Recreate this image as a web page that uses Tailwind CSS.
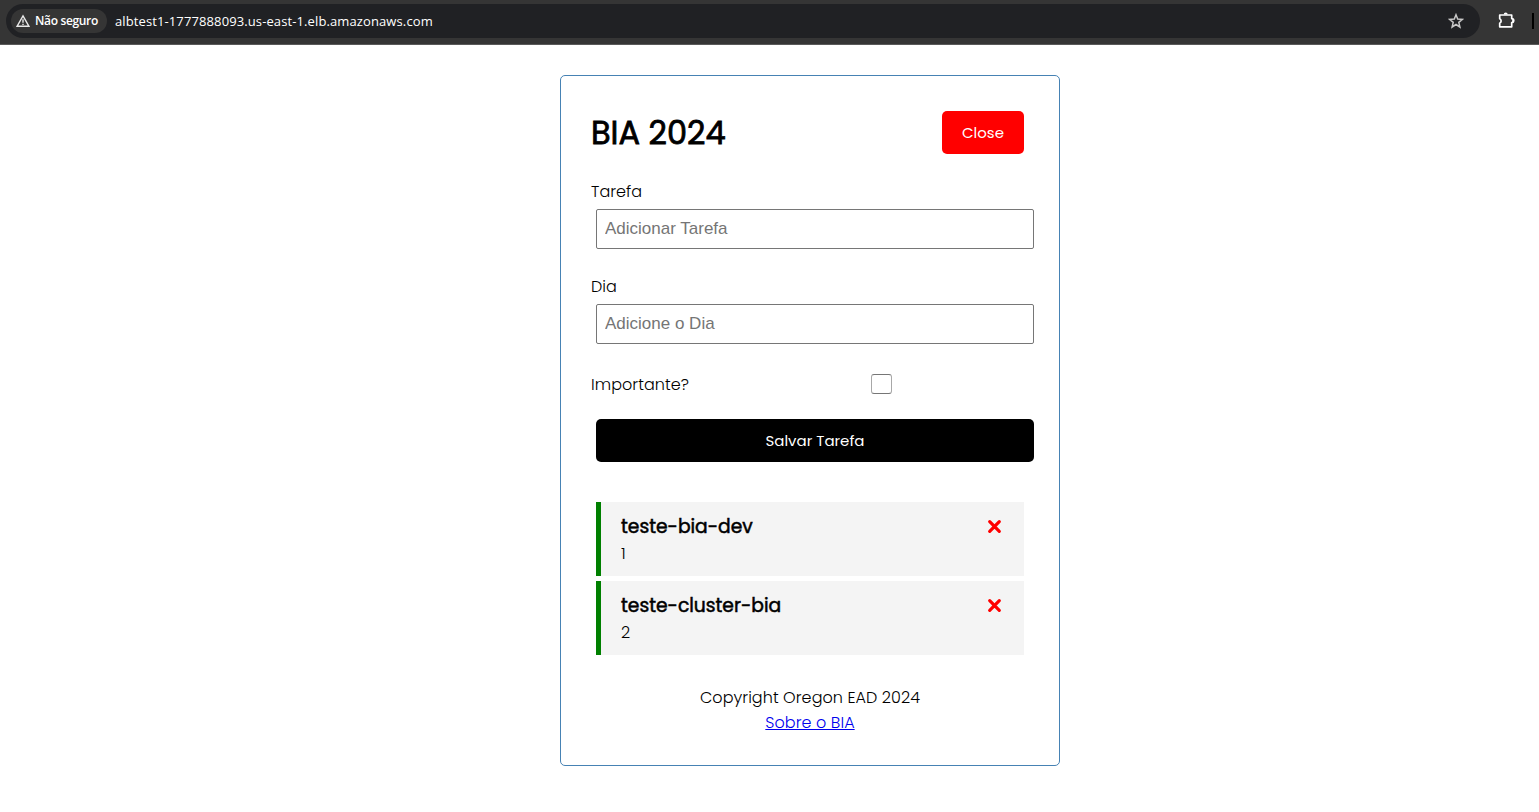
<!DOCTYPE html>
<html lang="pt-BR">
<head>
<meta charset="utf-8">
<title>BIA 2024</title>
<script src="https://cdn.jsdelivr.net/npm/@tailwindcss/browser@4"></script>
</head>
<body class="h-[812px] overflow-hidden bg-white font-['Poppins','Inter',sans-serif] text-base font-light tracking-[0.06px] text-black [font-feature-settings:'cv11'] whitespace-nowrap">
<header class="flex h-[45px] items-start border-b border-[#5a5a5a] bg-[#353535] pt-1 pl-1.5 font-['Segoe_UI','Open_Sans',sans-serif] text-white">
  <div class="flex h-[34px] w-[1474px] items-center rounded-full bg-[#202124] pl-[5px]">
    <div class="flex h-6 w-24 items-center rounded-full bg-[#353535] pl-[5px]">
      <svg class="h-3.5 w-3.5" viewBox="0 0 14 14" fill="none" stroke="#e8e8e8" stroke-width="1.4"><path d="M7 1.8 13 12.3H1Z"/><path d="M7 5.2v3.6M7 9.7v1.3"/></svg>
      <span class="ml-[5px] text-xs font-semibold tracking-[-0.34px]">Não seguro</span>
    </div>
    <span class="ml-2 pt-0.5 text-[13px] font-normal tracking-[0.11px]">albtest1-1777888093.us-east-1.elb.amazonaws.com</span>
    <svg class="mr-4 ml-auto h-4 w-4" viewBox="0 0 16 16" fill="none" stroke="#c7c7c7" stroke-width="1.5"><path d="m8 1.8 1.7 4.3 4.7.3-3.6 3 1.1 4.6L8 11.5 4.1 14l1.1-4.6-3.6-3 4.7-.3Z"/></svg>
  </div>
  <svg class="mt-[7px] ml-[17px] h-[19px] w-[19px]" viewBox="0 0 19 19"><path d="M2.7 4h12v3.6a2 2 0 0 1 0 4v4.2h-12v-3.6a2.4 2.4 0 0 0 0-4.4Z" fill="none" stroke="#fff" stroke-width="1.7" stroke-linejoin="round"/><path d="M6.7 3.5a2 2 0 0 1 4 0ZM15.2 7.5a2 2 0 0 1 0 4Z" fill="#fff"/></svg>
  <span class="mt-[9px] ml-[16px] h-4 w-0.5 bg-black"></span>
</header>
<main class="mt-[30px] ml-[560px] h-[691px] w-[500px] rounded-[5px] border border-[steelblue] px-[30px] pt-[35px]">
  <div class="flex h-[43px] items-center justify-between pr-[5px]">
    <h1 class="text-[32px] leading-[43px] font-normal tracking-normal [-webkit-text-stroke:0.8px_black]">BIA 2024</h1>
    <button class="h-[43px] w-[82px] rounded-[5px] bg-[red] pt-0.5 text-[15px] font-normal tracking-normal text-white">Close</button>
  </div>
  <form>
    <label class="mt-[25px] block h-[25px] leading-[25px]">Tarefa</label>
    <input class="mt-[5px] ml-[5px] block h-10 w-[438px] rounded-[2px] border border-[#767676] px-2 font-['Liberation_Sans'] text-[17px] font-normal tracking-normal placeholder:text-[#757575]" placeholder="Adicionar Tarefa">
    <label class="mt-[25px] block h-[25px] leading-[25px]">Dia</label>
    <input class="mt-[5px] ml-[5px] block h-10 w-[438px] rounded-[2px] border border-[#767676] px-2 font-['Liberation_Sans'] text-[17px] font-normal tracking-normal placeholder:text-[#757575]" placeholder="Adicione o Dia">
    <div class="mt-[27px] flex h-[26px] items-center">
      <label class="w-[280px] pt-0.5">Importante?</label>
      <input type="checkbox" class="h-5 w-[21px] appearance-none rounded-[3px] border border-[#767676] border-x-[#a8a8a8]">
    </div>
    <button type="button" class="mt-[22px] ml-[5px] block h-[43px] w-[438px] rounded-[5px] bg-black pt-0.5 text-[15px] font-normal tracking-normal text-white">Salvar Tarefa</button>
  </form>
  <section class="mt-10 ml-[5px] flex w-[428px] flex-col gap-[5px]">
    <article class="h-[74px] border-l-[5px] border-[green] bg-[#f4f4f4] pt-[9px] pr-[22px] pl-5">
      <div class="flex h-[30px] items-center justify-between"><h3 class="pt-0.5 text-[18.72px] font-normal tracking-normal [-webkit-text-stroke:0.5px_black]">teste-bia-dev</h3>
      <svg class="h-[15px] w-[15px]" viewBox="0 0 15 15" stroke="red" stroke-width="3.2" stroke-linecap="round"><path d="m2.7 2.7 9.6 9.6m0-9.6-9.6 9.6"/></svg></div>
      <p class="leading-[25px]">1</p>
    </article>
    <article class="h-[74px] border-l-[5px] border-[green] bg-[#f4f4f4] pt-[9px] pr-[22px] pl-5">
      <div class="flex h-[30px] items-center justify-between"><h3 class="pt-0.5 text-[18.72px] font-normal tracking-normal [-webkit-text-stroke:0.5px_black]">teste-cluster-bia</h3>
      <svg class="h-[15px] w-[15px]" viewBox="0 0 15 15" stroke="red" stroke-width="3.2" stroke-linecap="round"><path d="m2.7 2.7 9.6 9.6m0-9.6-9.6 9.6"/></svg></div>
      <p class="leading-[25px]">2</p>
    </article>
  </section>
  <footer class="mt-[30px] text-center leading-[25px]">
    <p>Copyright Oregon EAD 2024</p>
    <a href="#" class="text-[#0000ee] underline">Sobre o BIA</a>
  </footer>
</main>
</body>
</html>
